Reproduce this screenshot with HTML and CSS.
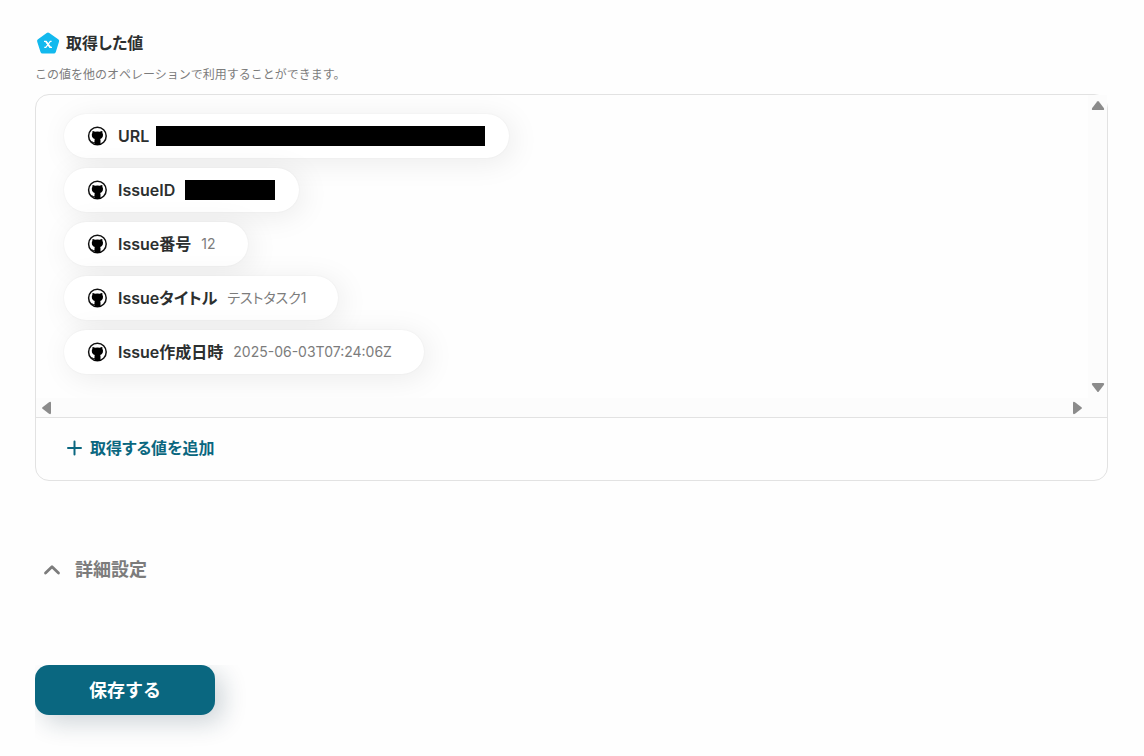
FILE: index.html
```html
<!DOCTYPE html>
<html lang="ja">
<head>
<meta charset="utf-8">
<title>取得した値</title>
<link rel="stylesheet" href="styles.css">
</head>
<body>
<svg class="sprite" aria-hidden="true">
  <symbol id="github" viewBox="0 0 20 20">
    <circle cx="10.400" cy="10" r="8.800" fill="#fff" stroke="#111" stroke-width="1.500"/>
    <path fill="#000" d="M5.600 5c.9 0 1.700.3 2.400.8a11 11 0 0 1 4.800 0c.7-.5 1.500-.8 2.400-.8.3.7.3 1.300.2 1.900.4.500.6 1.200.6 1.900 0 2.500-1.100 3.700-2.900 4.200.3.4.4.8.4 1.300V19H7.500v-2c-1.500.1-2.400-.4-2.900-1.200-.2-.4-.4-.6-.8-.8 1-.3 1.500.2 1.900.7.500.6 1 .7 1.800.5 0-1.300 0-2.500.3-3.200-1.900-.5-3-1.700-3-4.200 0-.7.2-1.400.6-1.900-.1-.6-.1-1.200.2-1.900z"/>
  </symbol>
</svg>
<main class="page">
  <section class="values">
    <h2 class="heading">
      <svg class="heading-icon" viewBox="0 -1 24 24" aria-hidden="true">
        <path d="M10.700 1a2.200 2.200 0 0 1 2.600 0l8.900 6.200a2.200 2.200 0 0 1 .8 2.500l-3.200 10.400a2.200 2.200 0 0 1-2.100 1.500H6.600a2.200 2.200 0 0 1-2.100-1.500L1.200 9.700a2.200 2.200 0 0 1 .8-2.500z" fill="#12b9ee"/>
        <path d="M8 9.300h2l4 6h2M15.600 9.300h-1.300l-4.500 6H8.300" fill="none" stroke="#fff" stroke-width="1.200"/>
        <path d="M9.800 9.300l4.400 6" stroke="#fff" stroke-width="1.800"/>
      </svg>
      取得した値
    </h2>
    <p class="note">この値を他のオペレーションで利用することができます。</p>
    <div class="box">
      <div class="scroller">
        <ul class="list">
          <li class="pill pill-masked"><svg class="pill-icon" aria-hidden="true"><use href="#github"/></svg><span class="label">URL</span><span class="mask mask-url"></span></li>
          <li class="pill pill-masked"><svg class="pill-icon" aria-hidden="true"><use href="#github"/></svg><span class="label">IssueID</span><span class="mask mask-id"></span></li>
          <li class="pill"><svg class="pill-icon" aria-hidden="true"><use href="#github"/></svg><span class="label">Issue番号</span><span class="value">12</span></li>
          <li class="pill"><svg class="pill-icon" aria-hidden="true"><use href="#github"/></svg><span class="label">Issueタイトル</span><span class="value">テストタスク1</span></li>
          <li class="pill"><svg class="pill-icon" aria-hidden="true"><use href="#github"/></svg><span class="label">Issue作成日時</span><span class="value">2025-06-03T07:24:06Z</span></li>
        </ul>
        <div class="bar bar-v">
          <button class="arrow" type="button" aria-label="上へ"><svg class="arrow-icon" viewBox="0 0 14 14"><path d="M6.200 2.500q.8-1 1.600 0l5 6.500q1 2-.8 2H2q-1.800 0-.8-2z"/></svg></button>
          <button class="arrow" type="button" aria-label="下へ"><svg class="arrow-icon" viewBox="0 0 14 14"><path d="M6.200 11.500q.8 1 1.600 0l5-6.500q1-2-.8-2H2q-1.800 0-.8 2z"/></svg></button>
        </div>
        <div class="bar bar-h">
          <button class="arrow" type="button" aria-label="左へ"><svg class="arrow-icon" viewBox="0 0 14 14"><path d="M2.500 6.200q-1 .8 0 1.600l6.500 5q2 1 2-.8V2q0-1.800-2-.8z"/></svg></button>
          <button class="arrow" type="button" aria-label="右へ"><svg class="arrow-icon" viewBox="0 0 14 14"><path d="M11.500 6.200q1 .8 0 1.600l-6.500 5q-2 1-2-.8V2q0-1.800 2-.8z"/></svg></button>
        </div>
        <div class="bar"></div>
      </div>
      <div class="footer">
        <button class="add" type="button">
          <svg class="add-icon" viewBox="0 0 16 16" aria-hidden="true"><path d="M8.500 1.500v13M2 8h13" stroke="currentColor" stroke-width="2" stroke-linecap="round"/></svg>
          取得する値を追加
        </button>
      </div>
    </div>
  </section>
  <button class="details" type="button" aria-expanded="false">
    <svg class="details-icon" viewBox="0 0 18 12" aria-hidden="true"><path d="M2.500 9L9 2.700l6.500 6.300" fill="none" stroke="currentColor" stroke-width="2.800" stroke-linecap="round" stroke-linejoin="round"/></svg>
    詳細設定
  </button>
  <div class="actions"><button class="save" type="submit">保存する</button></div>
</main>
</body>
</html>
```
FILE: styles.css
```css
* { box-sizing: border-box; }
body {
  margin: 0;
  background: #fefefe;
  color: #2c2f2f;
  font-family: Inter, "Noto Sans CJK JP", sans-serif;
}
button {
  border: 0;
  padding: 0;
  background: none;
  font: inherit;
  cursor: pointer;
}
svg { flex: none; }
.sprite { position: absolute; width: 0; height: 0; }
.page {
  display: flex;
  flex-direction: column;
  padding: 31px 36px 0 35px;
}
.heading {
  display: flex;
  align-items: center;
  gap: 6px;
  margin: 0;
  padding-left: 1px;
  font-size: 16px;
  font-weight: 600;
  line-height: 24px;
  font-feature-settings: "palt";
}
.heading-icon { width: 24px; height: 24px; }
.note {
  margin: 10px 0 9px;
  color: #7c7c7c;
  font-size: 12px;
  line-height: 20px;
}
.box {
  border: 1px solid #e2e2e2;
  border-radius: 14px;
}
.scroller {
  display: grid;
  grid-template-columns: 1fr 19px;
  grid-template-rows: auto 19px;
}
.list {
  display: flex;
  flex-direction: column;
  align-items: flex-start;
  gap: 10px;
  margin: 0;
  padding: 19px 28px 24px;
  overflow: hidden;
  list-style: none;
}
.pill {
  display: flex;
  align-items: center;
  height: 44px;
  padding: 0 32px 0 23px;
  border-radius: 22px;
  background: #fff;
  box-shadow: 4px 4px 30px rgba(0, 0, 0, 0.08), 0 0 2px rgba(0, 0, 0, 0.06);
}
.pill-masked { padding-right: 24px; }
.pill-icon { width: 20px; height: 20px; margin-right: 11px; }
.label {
  font-size: 16px;
  font-weight: 600;
  line-height: 24px;
  font-feature-settings: "palt";
}
.value {
  margin-left: 10px;
  color: #7c7c7c;
  font-size: 14px;
  line-height: 20px;
  font-feature-settings: "palt";
}
.mask { height: 20px; background: #000; }
.mask-url { width: 329px; margin-left: 7px; }
.mask-id { width: 90px; margin-left: 10px; }
.bar {
  display: flex;
  justify-content: space-between;
  background: #fcfcfc;
}
.bar-v { flex-direction: column; align-items: center; padding: 4px 0; }
.bar-h { align-items: center; padding: 0 4px; }
.arrow { display: flex; }
.arrow-icon { width: 14px; height: 14px; fill: #8b8b8b; }
.footer {
  padding: 18px 30px 20px;
  border-top: 1px solid #e2e2e2;
}
.add {
  display: flex;
  align-items: center;
  gap: 8px;
  color: #0a6780;
  font-size: 16px;
  font-weight: 600;
  line-height: 24px;
  font-feature-settings: "palt";
}
.add-icon { width: 16px; height: 16px; }
.details {
  display: flex;
  align-items: center;
  align-self: flex-start;
  gap: 14px;
  margin: 75px 0 0 8px;
  color: #7c7c7c;
  font-size: 18px;
  font-weight: 600;
  line-height: 28px;
}
.details-icon { width: 18px; height: 12px; }
.actions {
  margin-top: 81px;
  padding-bottom: 40px;
  overflow: hidden;
}
.save {
  display: block;
  width: 180px;
  height: 50px;
  padding-bottom: 2px;
  border-radius: 14px;
  background: #0a6780;
  box-shadow: 8px 8px 24px rgba(20, 50, 70, 0.2);
  color: #fff;
  font-size: 18px;
  font-weight: 700;
}
```
